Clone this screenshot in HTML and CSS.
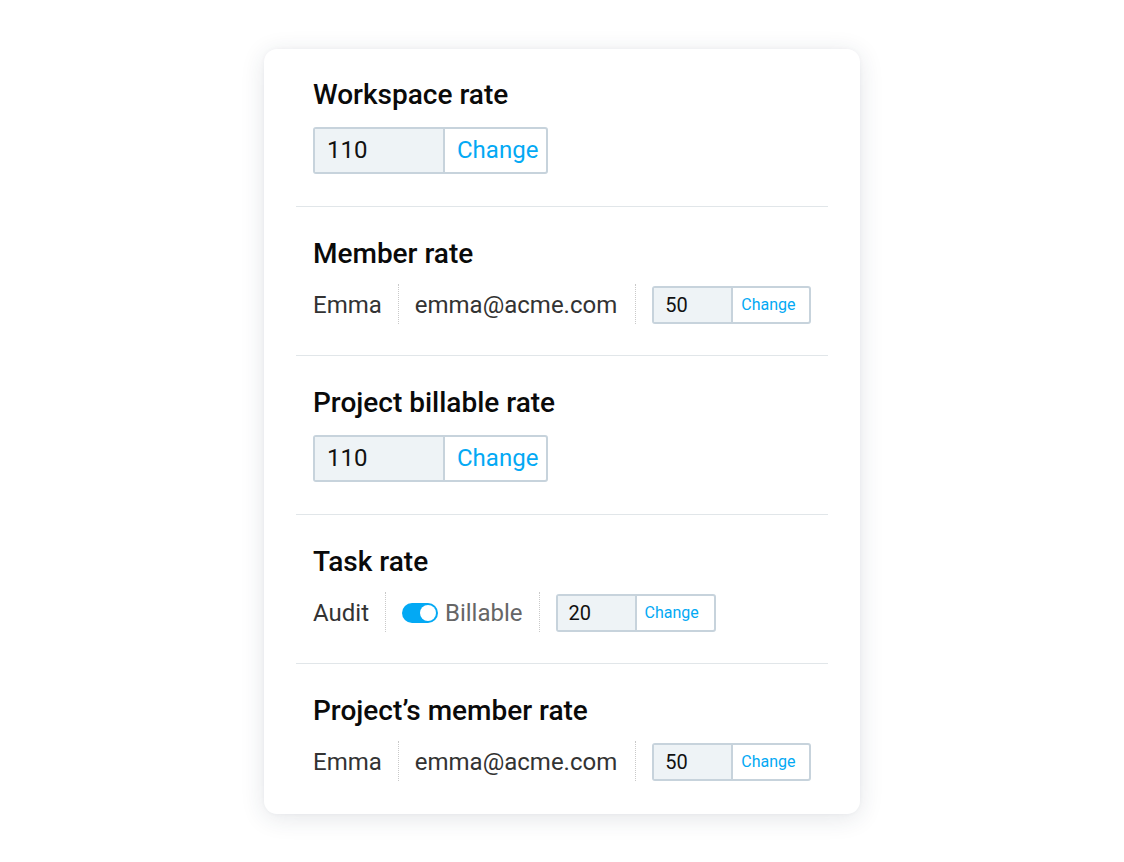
FILE: index.html
```html
<!DOCTYPE html>
<html lang="en">
<head>
<meta charset="utf-8">
<title>Rates</title>
<link rel="stylesheet" href="styles.css">
</head>
<body>
<div class="page">
  <div class="card">
    <section class="section first">
      <h2 class="title">Workspace rate</h2>
      <div class="rate big">
        <span class="value">110</span>
        <span class="change">Change</span>
      </div>
    </section>
    <section class="section rowsec">
      <h2 class="title">Member rate</h2>
      <div class="row">
        <span class="cell name">Emma</span>
        <span class="sep"></span>
        <span class="cell email">emma@acme.com</span>
        <span class="sep"></span>
        <div class="rate small">
          <span class="value">50</span>
          <span class="change">Change</span>
        </div>
      </div>
    </section>
    <section class="section">
      <h2 class="title">Project billable rate</h2>
      <div class="rate big">
        <span class="value">110</span>
        <span class="change">Change</span>
      </div>
    </section>
    <section class="section rowsec">
      <h2 class="title">Task rate</h2>
      <div class="row">
        <span class="cell name">Audit</span>
        <span class="sep"></span>
        <span class="cell toggle-cell"><span class="toggle"><span class="knob"></span></span><span class="billable">Billable</span></span>
        <span class="sep"></span>
        <div class="rate small">
          <span class="value">20</span>
          <span class="change">Change</span>
        </div>
      </div>
    </section>
    <section class="section rowsec last">
      <h2 class="title">Project’s member rate</h2>
      <div class="row">
        <span class="cell name">Emma</span>
        <span class="sep"></span>
        <span class="cell email">emma@acme.com</span>
        <span class="sep"></span>
        <div class="rate small">
          <span class="value">50</span>
          <span class="change">Change</span>
        </div>
      </div>
    </section>
  </div>
</div>
</body>
</html>
```

FILE: styles.css
```css
* { box-sizing: border-box; }
html, body {
  margin: 0;
  padding: 0;
  background: #ffffff;
  font-family: Roboto, "Liberation Sans", Arial, sans-serif;
}
.page {
  width: 1124px;
  height: 862px;
  display: flex;
  align-items: center;
  justify-content: center;
}
.card {
  width: 596px;
  height: 765px;
  background: #fff;
  border-radius: 13px;
  box-shadow: 0 4px 24px rgba(30, 50, 70, 0.12), 0 0 4px rgba(30, 50, 70, 0.04);
  padding: 0 32px;
  display: flex;
  flex-direction: column;
}
.section {
  padding: 32px 17px 32px;
  border-bottom: 1px solid #e1e6e9;
}
.section.first { padding-top: 31px; }
.section.rowsec { padding-bottom: 31px; }
.section.last { border-bottom: none; }
.title {
  margin: 0 0 17px;
  font-size: 28px;
  line-height: 30px;
  font-weight: 500;
  color: #0a0a0a;
}
.rate {
  display: inline-flex;
  border: 2px solid #c7d3dc;
  border-radius: 3px;
  overflow: hidden;
  background: #fff;
}
.rate .value {
  background: #eef3f6;
  border-right: 2px solid #c7d3dc;
  color: #111;
  display: flex;
  align-items: center;
}
.rate .change {
  color: #03a9f4;
  display: flex;
  align-items: center;
}
.rate.big { height: 47px; width: 235px; }
.rate.big .value { width: 130px; padding-left: 12px; font-size: 24px; }
.rate.big .change { padding-left: 12px; font-size: 24px; }
.rate.small { height: 38px; width: 160px; }
.rate.small .value { width: 79px; padding-left: 11px; font-size: 20px; }
.rate.small .change { padding-left: 8px; font-size: 16px; }
.row {
  display: flex;
  align-items: center;
  height: 38px;
}
.cell {
  font-size: 24px;
  color: #333;
  display: flex;
  align-items: center;
}
.cell.email { margin-right: 2px; }
.sep {
  align-self: stretch;
  width: 0;
  border-left: 1px dotted #c9c9c9;
  margin: -2px 16px 0;
}
.toggle {
  width: 36px;
  height: 20px;
  border-radius: 10px;
  background: #03a9f4;
  position: relative;
  margin-right: 7px;
}
.knob {
  position: absolute;
  right: 2px;
  top: 2px;
  width: 16px;
  height: 16px;
  border-radius: 50%;
  background: #fff;
}
.billable { color: #666; }
```
